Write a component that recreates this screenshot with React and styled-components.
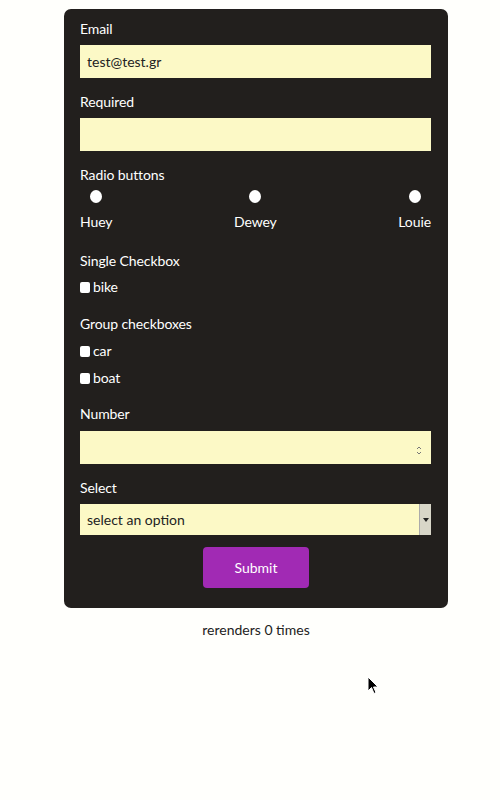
import styled, { createGlobalStyle } from "styled-components";

const GlobalStyle = createGlobalStyle`
    body {
        margin: 0;
        background: #fffffc;
        font-family: Lato, "Noto Sans", sans-serif;
    }
`;

const Page = styled.div`
    position: relative;
    min-height: 800px;
    display: flex;
    flex-direction: column;
    align-items: center;
    padding: 9px 0 0 12px;
    box-sizing: border-box;
`;

const Card = styled.form`
    width: 384px;
    box-sizing: border-box;
    padding: 10px 17px 20px 16px;
    background: #221f1d;
    border-radius: 7px;
    display: flex;
    flex-direction: column;
    gap: 14px;
    color: #fff;
    font-size: 14px;
    letter-spacing: -0.1px;
`;

const Field = styled.div`
    display: flex;
    flex-direction: column;
    gap: ${(p) => p.gap || 6}px;
    margin-top: ${(p) => p.offset || 0}px;
`;

const Label = styled.label`
    line-height: 20px;
`;

const Input = styled.input`
    height: 33px;
    box-sizing: border-box;
    border: none;
    outline: none;
    background: #fcf9c6;
    padding: 0 7px;
    font-family: inherit;
    font-size: 14px;
    color: #222;
    appearance: textfield;
    &::-webkit-inner-spin-button,
    &::-webkit-outer-spin-button {
        -webkit-appearance: none;
        margin: 0;
    }
`;

const InputWrap = styled.div`
    position: relative;
    display: flex;
    flex-direction: column;
`;

const Spinner = styled.span`
    position: absolute;
    right: 9px;
    top: 11px;
    width: 6px;
    height: 11px;
`;

const RadioRow = styled.div`
    display: flex;
    justify-content: space-between;
`;

const RadioOption = styled.label`
    display: flex;
    flex-direction: column;
    align-items: center;
    gap: 9px;
    line-height: 20px;
`;

const Radio = styled.input`
    appearance: none;
    margin: 0;
    width: 12px;
    height: 13px;
    border-radius: 50%;
    background: #fff;
`;

const CheckRow = styled.label`
    display: flex;
    align-items: center;
    gap: 3px;
    line-height: 20px;
    margin-top: ${(p) => p.offset || 0}px;
`;

const Check = styled.input`
    appearance: none;
    margin: 0;
    width: 10px;
    height: 11px;
    border-radius: 2px;
    background: #fff;
`;

const Select = styled.select`
    height: 31px;
    appearance: none;
    border: none;
    outline: none;
    background: #fcf9c6;
    padding: 0 7px;
    font-family: inherit;
    font-size: 14px;
    color: #222;
`;

const SelectArrow = styled.span`
    position: absolute;
    right: 0;
    top: 0;
    bottom: 0;
    width: 11px;
    background: #d8d6c8;
    border-left: 1px solid #aaa;
    display: flex;
    align-items: center;
    justify-content: center;
    pointer-events: none;
    &::after {
        content: "";
        border-left: 3px solid transparent;
        border-right: 3px solid transparent;
        border-top: 4px solid #222;
    }
`;

const Submit = styled.button`
    align-self: center;
    margin-left: 1px;
    margin-top: -2px;
    width: 106px;
    height: 41px;
    border: none;
    border-radius: 4px;
    background: #a12ab4;
    color: #fff;
    font-family: inherit;
    font-size: 14px;
`;

const Rerenders = styled.p`
    margin: 12px 0 0;
    font-size: 14px;
    color: #222;
    line-height: 20px;
`;

const Cursor = styled.svg`
    position: absolute;
    left: 367px;
    top: 676px;
`;

function App() {
    return (
        <Page>
            <GlobalStyle />
            <Card>
                <Field>
                    <Label>Email</Label>
                    <Input type="email" defaultValue="test@test.gr" />
                </Field>
                <Field>
                    <Label>Required</Label>
                    <Input type="text" />
                </Field>
                <Field gap={5}>
                    <Label>Radio buttons</Label>
                    <RadioRow>
                        <RadioOption>
                            <Radio type="radio" name="duck" />
                            Huey
                        </RadioOption>
                        <RadioOption>
                            <Radio type="radio" name="duck" />
                            Dewey
                        </RadioOption>
                        <RadioOption>
                            <Radio type="radio" name="duck" />
                            Louie
                        </RadioOption>
                    </RadioRow>
                </Field>
                <Field offset={5}>
                    <Label>Single Checkbox</Label>
                    <CheckRow>
                        <Check type="checkbox" />
                        bike
                    </CheckRow>
                </Field>
                <Field offset={3}>
                    <Label>Group checkboxes</Label>
                    <CheckRow offset={1}>
                        <Check type="checkbox" />
                        car
                    </CheckRow>
                    <CheckRow offset={1}>
                        <Check type="checkbox" />
                        boat
                    </CheckRow>
                </Field>
                <Field gap={7} offset={2}>
                    <Label>Number</Label>
                    <InputWrap>
                        <Input type="number" />
                        <Spinner>
                            <svg width="6" height="11" viewBox="0 0 6 11">
                                <path d="M1 4 L3 2 L5 4 M1 7 L3 9 L5 7" stroke="#777" fill="none" strokeWidth="1" />
                            </svg>
                        </Spinner>
                    </InputWrap>
                </Field>
                <Field gap={6}>
                    <Label>Select</Label>
                    <InputWrap>
                        <Select defaultValue="">
                            <option value="">select an option</option>
                        </Select>
                        <SelectArrow />
                    </InputWrap>
                </Field>
                <Submit type="button">Submit</Submit>
            </Card>
            <Rerenders>rerenders 0 times</Rerenders>
            <Cursor width="12" height="19" viewBox="0 0 12 19">
                <path d="M1 1 L1 15 L4.5 11.5 L7 17.5 L9 16.5 L6.5 11 L11 11 Z" fill="#000" stroke="#fff" strokeWidth="1" />
            </Cursor>
        </Page>
    );
}

export default App;
